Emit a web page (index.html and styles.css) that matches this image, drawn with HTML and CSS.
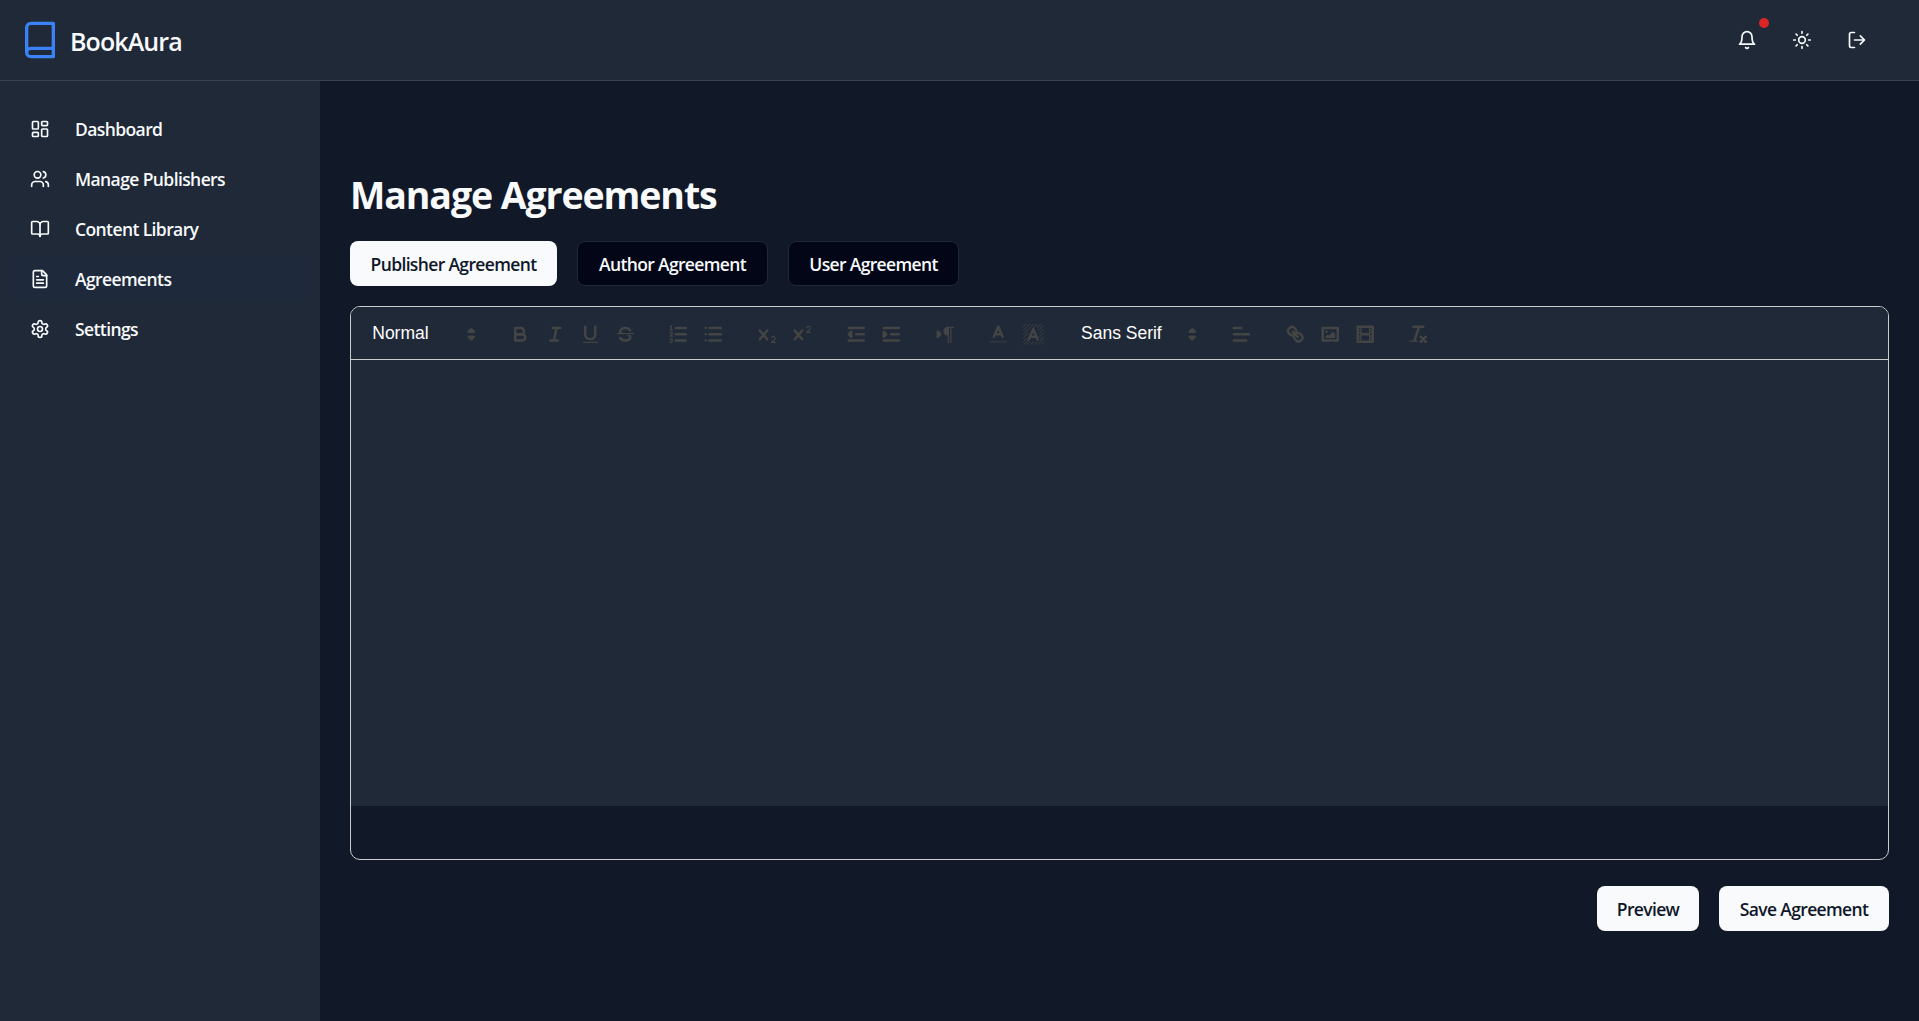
FILE: index.html
```html
<!DOCTYPE html>
<html lang="en">
<head>
<meta charset="utf-8">
<title>BookAura</title>
<link rel="stylesheet" href="styles.css">
</head>
<body>
<div class="app">
  <header class="topbar">
    <div class="brand">
      <svg class="brand-icon" viewBox="0 0 24 24"><path d="M4 19.5v-15A2.5 2.5 0 0 1 6.5 2H20v20H6.5a2.5 2.5 0 0 1 0-5H20"/></svg>
      <span class="brand-name">BookAura</span>
    </div>
    <div class="actions">
      <button class="action"><svg class="icon" viewBox="0 0 24 24"><path d="M6 8a6 6 0 0 1 12 0c0 7 3 9 3 9H3s3-2 3-9"/><path d="M10.3 21a1.94 1.94 0 0 0 3.4 0"/></svg><span class="dot"></span></button>
      <button class="action"><svg class="icon" viewBox="0 0 24 24"><circle cx="12" cy="12" r="4"/><path d="M12 2v2M12 20v2M4.93 4.93l1.41 1.41M17.66 17.66l1.41 1.41M2 12h2M20 12h2M6.34 17.66l-1.41 1.41M19.07 4.93l-1.41 1.41"/></svg></button>
      <button class="action"><svg class="icon" viewBox="0 0 24 24"><path d="M9 21H5a2 2 0 0 1-2-2V5a2 2 0 0 1 2-2h4"/><path d="M16 17l5-5-5-5M21 12H9"/></svg></button>
    </div>
  </header>
  <div class="body">
    <nav class="sidebar">
      <a class="nav-item"><svg class="icon" viewBox="0 0 24 24"><rect width="7" height="9" x="3" y="3" rx="1"/><rect width="7" height="5" x="14" y="3" rx="1"/><rect width="7" height="9" x="14" y="12" rx="1"/><rect width="7" height="5" x="3" y="16" rx="1"/></svg><span>Dashboard</span></a>
      <a class="nav-item"><svg class="icon" viewBox="0 0 24 24"><path d="M16 21v-2a4 4 0 0 0-4-4H6a4 4 0 0 0-4 4v2"/><circle cx="9" cy="7" r="4"/><path d="M22 21v-2a4 4 0 0 0-3-3.87M16 3.13a4 4 0 0 1 0 7.75"/></svg><span>Manage Publishers</span></a>
      <a class="nav-item"><svg class="icon" viewBox="0 0 24 24"><path d="M12 7v14"/><path d="M3 18a1 1 0 0 1-1-1V4a1 1 0 0 1 1-1h5a4 4 0 0 1 4 4 4 4 0 0 1 4-4h5a1 1 0 0 1 1 1v13a1 1 0 0 1-1 1h-6a3 3 0 0 0-3 3 3 3 0 0 0-3-3z"/></svg><span>Content Library</span></a>
      <a class="nav-item active"><svg class="icon" viewBox="0 0 24 24"><path d="M15 2H6a2 2 0 0 0-2 2v16a2 2 0 0 0 2 2h12a2 2 0 0 0 2-2V7Z"/><path d="M14 2v4a2 2 0 0 0 2 2h4M10 9H8M16 13H8M16 17H8"/></svg><span>Agreements</span></a>
      <a class="nav-item"><svg class="icon" viewBox="0 0 24 24"><path d="M12.22 2h-.44a2 2 0 0 0-2 2v.18a2 2 0 0 1-1 1.73l-.43.25a2 2 0 0 1-2 0l-.15-.08a2 2 0 0 0-2.73.73l-.22.38a2 2 0 0 0 .73 2.73l.15.1a2 2 0 0 1 1 1.72v.51a2 2 0 0 1-1 1.74l-.15.09a2 2 0 0 0-.73 2.73l.22.38a2 2 0 0 0 2.73.73l.15-.08a2 2 0 0 1 2 0l.43.25a2 2 0 0 1 1 1.73V20a2 2 0 0 0 2 2h.44a2 2 0 0 0 2-2v-.18a2 2 0 0 1 1-1.73l.43-.25a2 2 0 0 1 2 0l.15.08a2 2 0 0 0 2.73-.73l.22-.39a2 2 0 0 0-.73-2.73l-.15-.08a2 2 0 0 1-1-1.74v-.5a2 2 0 0 1 1-1.74l.15-.09a2 2 0 0 0 .73-2.73l-.22-.38a2 2 0 0 0-2.73-.73l-.15.08a2 2 0 0 1-2 0l-.43-.25a2 2 0 0 1-1-1.73V4a2 2 0 0 0-2-2z"/><circle cx="12" cy="12" r="3"/></svg><span>Settings</span></a>
    </nav>
    <main class="main">
      <h1 class="title">Manage Agreements</h1>
      <div class="tabs">
        <button class="btn solid w-publisher">Publisher Agreement</button>
        <button class="btn outline w-author">Author Agreement</button>
        <button class="btn outline w-user">User Agreement</button>
      </div>
      <section class="editor">
        <div class="toolbar">
          <div class="formats"><div class="picker"><span class="label">Normal</span><svg class="q" viewBox="0 0 18 18"><polygon class="qs qf" points="7 11 9 13 11 11 7 11"/><polygon class="qs qf" points="7 7 9 5 11 7 7 7"/></svg></div></div>
          <div class="formats">
            <button class="tool"><svg class="q" viewBox="0 0 18 18"><path class="qs" d="M5,4H9.5A2.5,2.5,0,0,1,12,6.5v0A2.5,2.5,0,0,1,9.5,9H5A0,0,0,0,1,5,9V4A0,0,0,0,1,5,4Z"/><path class="qs" d="M5,9h5.5A2.5,2.5,0,0,1,13,11.5v0A2.5,2.5,0,0,1,10.5,14H5a0,0,0,0,1,0,0V9A0,0,0,0,1,5,9Z"/></svg></button>
            <button class="tool"><svg class="q" viewBox="0 0 18 18"><path class="qs" d="M7 4H13M5 14H11M8 14L10 4"/></svg></button>
            <button class="tool"><svg class="q" viewBox="0 0 18 18"><path class="qs" d="M5,3V9a4.012,4.012,0,0,0,4,4H9a4.012,4.012,0,0,0,4-4V3"/><rect class="qf" height="1" rx="0.5" ry="0.5" width="12" x="3" y="15"/></svg></button>
            <button class="tool"><svg class="q" viewBox="0 0 18 18"><path class="qs thin" d="M15.5 8.5H2.5"/><path class="qf" d="M9.007,8C6.542,7.791,6,7.519,6,6.5,6,5.792,7.283,5,9,5c1.571,0,2.765.679,2.969,1.309a1,1,0,0,0,1.9-.617C13.356,4.106,11.354,3,9,3,6.2,3,4,4.538,4,6.5a3.2,3.2,0,0,0,.5,1.843Z"/><path class="qf" d="M8.984,10C11.457,10.208,12,10.479,12,11.5c0,0.708-1.283,1.5-3,1.5-1.571,0-2.765-.679-2.969-1.309a1,1,0,1,0-1.9.617C4.644,13.894,6.646,15,9,15c2.8,0,5-1.538,5-3.5a3.2,3.2,0,0,0-.5-1.843Z"/></svg></button>
          </div>
          <div class="formats">
            <button class="tool"><svg class="q" viewBox="0 0 18 18"><path class="qs" d="M7 4H15M7 9H15M7 14H15"/><path class="qs thin" d="M2.5 5.5H4.5"/><path class="qf" d="M3.5,6A0.5,0.5,0,0,1,3,5.5V3.085l-0.276.138A0.5,0.5,0,0,1,2.053,3c-0.124-.247-0.023-0.324.224-0.447l1-.5A0.5,0.5,0,0,1,4,2.5v3A0.5,0.5,0,0,1,3.5,6Z"/><path class="qs thin" d="M4.5,10.5h-2c0-.234,1.85-1.076,1.85-2.234A0.959,0.959,0,0,0,2.5,8.156"/><path class="qs thin" d="M2.5,14.846a0.959,0.959,0,0,0,1.85-.109A0.7,0.7,0,0,0,3.75,14a0.688,0.688,0,0,0,.6-0.736,0.959,0.959,0,0,0-1.85-.109"/></svg></button>
            <button class="tool"><svg class="q" viewBox="0 0 18 18"><path class="qs" d="M6 4H15M6 9H15M6 14H15M3 4H3M3 9H3M3 14H3"/></svg></button>
          </div>
          <div class="formats">
            <button class="tool"><svg class="q" viewBox="0 0 18 18"><path class="qf" d="M15.5,15H13.861a3.858,3.858,0,0,0,1.914-2.975,1.8,1.8,0,0,0-1.6-1.751A1.921,1.921,0,0,0,12.021,11.7a0.50013,0.50013,0,1,0,.957.291h0a0.914,0.914,0,0,1,1.053-.725,0.81,0.81,0,0,1,.744.762c0,1.076-1.16971,1.86982-1.93971,2.43082A1.45639,1.45639,0,0,0,12,15.5a0.5,0.5,0,0,0,.5.5h3A0.5,0.5,0,0,0,15.5,15Z"/><path class="qf" d="M9.65,5.241a1,1,0,0,0-1.409.108L6,7.964,3.759,5.349A1,1,0,0,0,2.192,6.59178Q2.21541,6.6213,2.241,6.649L4.684,9.5,2.241,12.35A1,1,0,0,0,3.71,13.70722q0.02557-.02768.049-0.05722L6,11.036,8.241,13.65a1,1,0,1,0,1.567-1.24277Q9.78459,12.3777,9.759,12.35L7.316,9.5,9.759,6.651A1,1,0,0,0,9.65,5.241Z"/></svg></button>
            <button class="tool"><svg class="q" viewBox="0 0 18 18"><path class="qf" d="M15.5,7H13.861a4.015,4.015,0,0,0,1.914-2.975,1.8,1.8,0,0,0-1.6-1.751A1.922,1.922,0,0,0,12.021,3.7a0.5,0.5,0,1,0,.957.291,0.917,0.917,0,0,1,1.053-.725,0.81,0.81,0,0,1,.744.762c0,1.077-1.164,1.925-1.934,2.486A1.423,1.423,0,0,0,12,7.5a0.5,0.5,0,0,0,.5.5h3A0.5,0.5,0,0,0,15.5,7Z"/><path class="qf" d="M9.651,5.241a1,1,0,0,0-1.41.108L6,7.964,3.759,5.349a1,1,0,1,0-1.519,1.3L4.683,9.5,2.241,12.35a1,1,0,1,0,1.519,1.3L6,11.036,8.241,13.65a1,1,0,0,0,1.519-1.3L7.317,9.5,9.759,6.651A1,1,0,0,0,9.651,5.241Z"/></svg></button>
          </div>
          <div class="formats">
            <button class="tool"><svg class="q" viewBox="0 0 18 18"><path class="qs" d="M3 14H15M3 4H15M9 9H15"/><polygon class="qs qf" points="5 7 5 11 3 9 5 7"/></svg></button>
            <button class="tool"><svg class="q" viewBox="0 0 18 18"><path class="qs" d="M3 14H15M3 4H15M9 9H15"/><polygon class="qs qf" points="3 7 3 11 5 9 3 7"/></svg></button>
          </div>
          <div class="formats">
            <button class="tool"><svg class="q" viewBox="0 0 18 18"><polygon class="qs qf" points="3 11 5 9 3 7 3 11"/><path class="qs qf" d="M11,4A2.500,2.500 0 0 0 11,9Z"/><rect class="qf" height="12" width="1" x="11" y="4"/><rect class="qf" height="12" width="1" x="13" y="4"/><path class="qf" d="M10 3h6v1h-6z"/></svg></button>
          </div>
          <div class="formats">
            <button class="tool"><svg class="q" viewBox="0 0 18 18"><path class="qs faint" d="M3 15H15"/><path class="qs" d="M5.5 11L9 3L12.5 11M11.63 9H6.38"/></svg></button>
            <button class="tool"><svg class="q" viewBox="0 0 18 18"><path class="hatch" d="M1 3L3 1M1 6L6 1M1 9L9 1M1 12L5 8M9 4L12 1M1 15L4 12M12 4L15 1M1.500 17L5 13.500M13 6L17 2M4 17L6 15M14 8L17 5M7 17L9 15M14 11L17 8M10 17L12 15M14 14L17 11M13 17L17 13M16 17L17 16"/><path class="qs" d="M5.500 13L9 5L12.500 13M11.630 11H6.380"/></svg></button>
          </div>
          <div class="formats"><div class="picker font"><span class="label">Sans Serif</span><svg class="q" viewBox="0 0 18 18"><polygon class="qs qf" points="7 11 9 13 11 11 7 11"/><polygon class="qs qf" points="7 7 9 5 11 7 7 7"/></svg></div></div>
          <div class="formats">
            <button class="tool"><svg class="q" viewBox="0 0 18 18"><path class="qs" d="M3 9H15M3 14H13M3 4H9"/></svg></button>
          </div>
          <div class="formats">
            <button class="tool"><svg class="q" viewBox="0 0 18 18"><path class="qs" d="M7 7L11 11"/><path class="qs" d="M8.9,4.577a3.476,3.476,0,0,1,.36,4.679A3.476,3.476,0,0,1,4.577,8.9C3.185,7.5,2.035,6.4,4.217,4.217S7.5,3.185,8.9,4.577Z"/><path class="qs" d="M13.423,9.1a3.476,3.476,0,0,0-4.679-.36,3.476,3.476,0,0,0,.36,4.679c1.392,1.392,2.5,2.542,4.679.36S14.815,10.5,13.423,9.1Z"/></svg></button>
            <button class="tool"><svg class="q" viewBox="0 0 18 18"><rect class="qs" height="10" width="12" x="3" y="4"/><circle class="qf" cx="6" cy="7" r="1"/><polyline class="qf" points="5 12 5 11 7 9 8 10 11 7 13 9 13 12 5 12"/></svg></button>
            <button class="tool"><svg class="q" viewBox="0 0 18 18"><rect class="qs" height="12" width="12" x="3" y="3"/><path class="qf" d="M5 3h1v12H5zM12 3h1v12h-1zM5 8h8v2H5zM3 5h3v1H3zM3 7h3v1H3zM3 10h3v1H3zM3 12h3v1H3zM12 5h3v1h-3zM12 7h3v1h-3zM12 10h3v1h-3zM12 12h3v1h-3z"/></svg></button>
          </div>
          <div class="formats">
            <button class="tool"><svg class="q" viewBox="0 0 18 18"><path class="qs" d="M5 3H13M6 14L9.35 4M11 11L15 15M15 11L11 15"/><rect class="qf" height="1" rx="0.5" ry="0.5" width="7" x="2" y="14"/></svg></button>
          </div>
        </div>
        <div class="content"></div>
      </section>
      <div class="footer-actions">
        <button class="btn solid w-preview">Preview</button>
        <button class="btn solid w-save">Save Agreement</button>
      </div>
    </main>
  </div>
</div>
</body>
</html>
```
FILE: styles.css
```css
* { box-sizing: border-box; }
body {
  margin: 0;
  background: #111827;
  color: #f8fafc;
  font-family: "Open Sans", "Noto Sans", sans-serif;
  font-size: 17.5px;
}
button { font: inherit; color: inherit; border: 0; background: none; padding: 0; }
.app { display: flex; flex-direction: column; height: 1021px; overflow: hidden; }
.topbar {
  display: flex; align-items: center; justify-content: space-between;
  height: 81px; flex: none;
  padding: 0 42px 0 20px;
  background: #1f2937;
  border-bottom: 1px solid #374151;
}
.brand { display: flex; align-items: center; gap: 10px; }
.brand-icon { width: 40px; height: 40px; fill: none; stroke: #3b82f6; stroke-width: 2; stroke-linecap: round; stroke-linejoin: round; }
.brand-name { font-size: 25px; font-weight: 600; line-height: 35px; letter-spacing: -0.9px; padding-top: 3px; }
.actions { display: flex; gap: 15px; }
.action { position: relative; width: 40px; height: 40px; display: flex; align-items: center; justify-content: center; }
.dot { position: absolute; top: -2px; right: -2px; width: 10px; height: 10px; border-radius: 50%; background: #dc2626; }
.icon { width: 20px; height: 20px; flex: none; fill: none; stroke: #f8fafc; stroke-width: 2; stroke-linecap: round; stroke-linejoin: round; }
.body { display: flex; flex: 1; }
.sidebar { width: 320px; flex: none; padding: 25px 10px; background: #1f2937; display: flex; flex-direction: column; gap: 5px; }
.nav-item { display: flex; align-items: center; gap: 25px; height: 45px; padding: 0 20px; border-radius: 8px; font-weight: 600; letter-spacing: -0.6px; }
.nav-item.active { background: #1e293b; }
.main { flex: 1; padding: 89px 30px 0; display: flex; flex-direction: column; }
.title { margin: 0 0 21px; font-size: 37.5px; line-height: 50px; font-weight: 700; letter-spacing: -1.1px; }
.tabs { display: flex; gap: 20px; margin-bottom: 20px; }
.btn { height: 45px; border-radius: 8px; padding-top: 1px; font-weight: 600; letter-spacing: -0.65px; white-space: nowrap; }
.solid { background: #f8fafc; color: #0f172a; }
.outline { background: #020617; border: 1px solid #1e293b; }
.w-publisher { width: 207px; }
.w-author { width: 191px; }
.w-user { width: 171px; }
.w-preview { width: 102px; }
.w-save { width: 170px; }
.editor { height: 554px; border: 1px solid #ccc; border-radius: 10px; overflow: hidden; }
.toolbar { display: flex; height: 53px; padding: 10px; background: #1f2937; border-bottom: 1px solid #ccc; }
.formats { display: flex; margin-right: 18.75px; }
.tool { width: 35px; height: 34px; display: flex; align-items: center; justify-content: center; }
.q { width: 22.5px; height: 22.5px; flex: none; }
.qs { fill: none; stroke: #444; stroke-width: 2; stroke-linecap: round; stroke-linejoin: round; }
.qs.qf, .qf { fill: #444; }
.qs.thin { stroke-width: 1; }
.faint { opacity: .4; }
.hatch { fill: none; stroke: #444; stroke-width: .7; stroke-linecap: round; }
.picker { display: flex; align-items: center; justify-content: space-between; width: 122.5px; height: 34px; padding: 0 1.25px 0 11.25px; font-family: "Liberation Sans", Arial, sans-serif; font-weight: 400; color: #fff; }
.picker.font { width: 135px; }
.label { padding-bottom: 2px; }
.content { height: 446px; background: #1f2937; }
.footer-actions { display: flex; justify-content: flex-end; gap: 20px; margin-top: 26px; }
```
